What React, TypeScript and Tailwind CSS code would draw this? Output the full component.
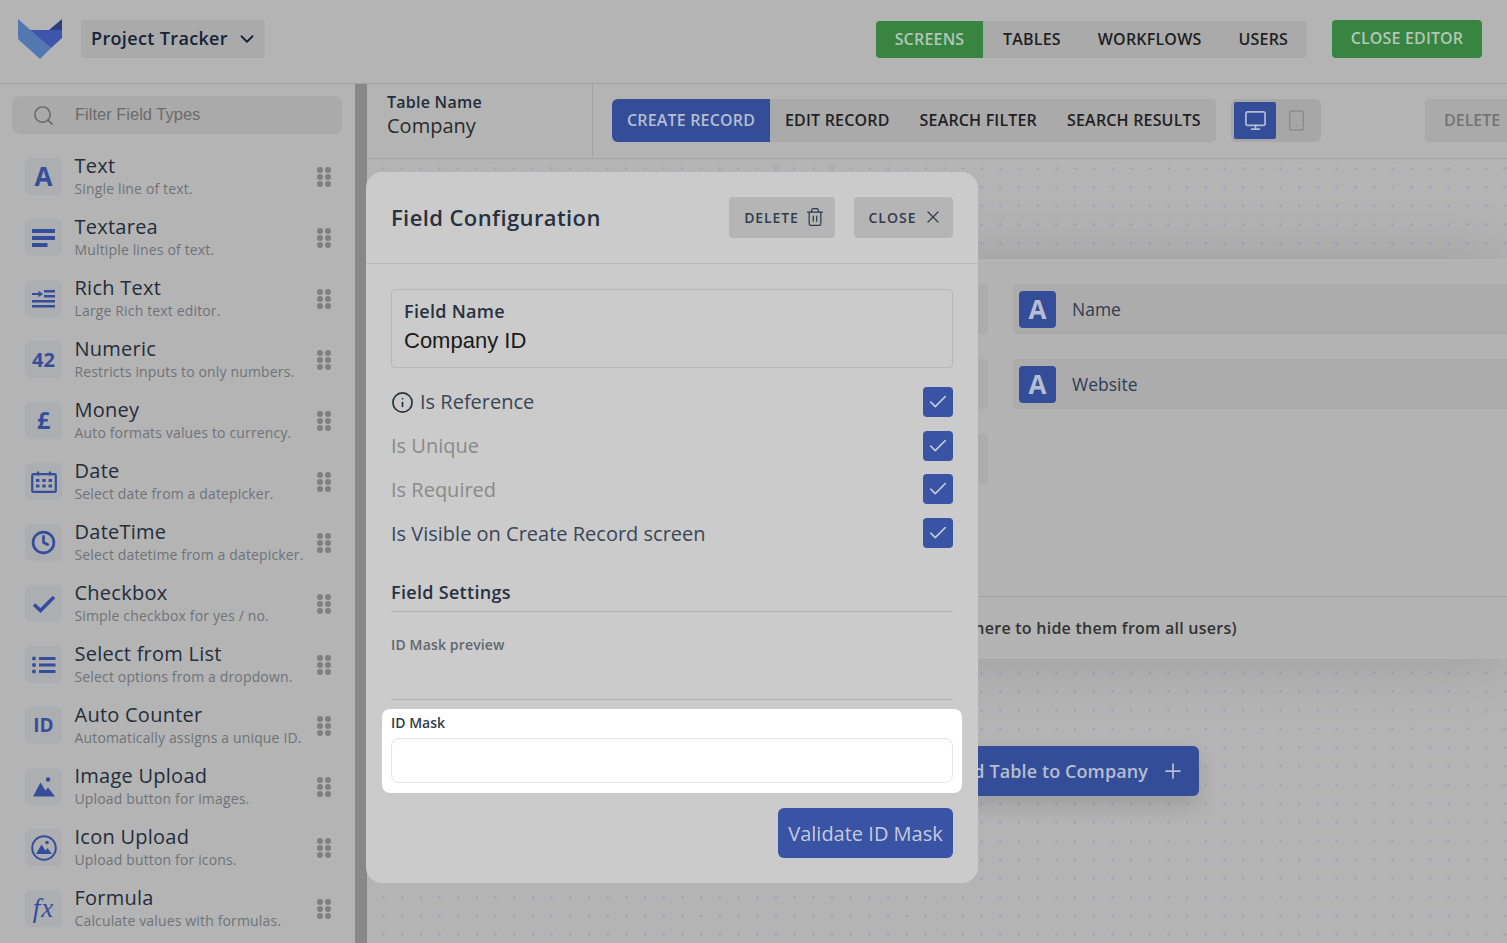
import React from "react";
import { ChevronDown, Search, Monitor, Smartphone, Trash2, X, Check, Info, Plus, Clock } from "lucide-react";

const blue = "#344e9b";

const Txt = ({ c }: { c: React.ReactNode }) => <>{c}</>;

const iconLines = (
  <svg width="24" height="20" viewBox="0 0 24 20" fill={blue}>
    <rect x="0" y="1" width="23" height="4" />
    <rect x="0" y="8" width="23" height="4" />
    <rect x="0" y="15" width="15.5" height="4" />
  </svg>
);
const iconRich = (
  <svg width="24" height="20" viewBox="0 0 24 20" fill={blue}>
    <rect x="12" y="1" width="11" height="2.5" />
    <rect x="12" y="6" width="11" height="2.5" />
    <path d="M0 4h6.5V1.8L11 5 6.5 8.2V6H0z" />
    <rect x="0" y="11" width="23" height="2.5" />
    <rect x="0" y="16" width="23" height="2.5" />
  </svg>
);
const iconCal = (
  <svg width="26" height="22" viewBox="0 0 26 22" fill="none">
    <rect x="1.2" y="3.2" width="23.6" height="17.6" rx="1.5" stroke={blue} strokeWidth="2.2" />
    <rect x="6" y="0.5" width="2.2" height="4" fill={blue} />
    <rect x="17.8" y="0.5" width="2.2" height="4" fill={blue} />
    <g fill={blue}>
      <rect x="5" y="8" width="3.4" height="3" /><rect x="11.3" y="8" width="3.4" height="3" /><rect x="17.6" y="8" width="3.4" height="3" />
      <rect x="5" y="13.5" width="3.4" height="3" /><rect x="11.3" y="13.5" width="3.4" height="3" /><rect x="17.6" y="13.5" width="3.4" height="3" />
    </g>
  </svg>
);
const iconCheck = (
  <svg width="24" height="18" viewBox="0 0 24 18" fill="none">
    <path d="M2 9.5 L8.5 15.5 L22 2" stroke={blue} strokeWidth="3.6" />
  </svg>
);
const iconList = (
  <svg width="24" height="18" viewBox="0 0 24 18" fill={blue}>
    <circle cx="2" cy="2.5" r="2" /><circle cx="2" cy="9" r="2" /><circle cx="2" cy="15.5" r="2" />
    <rect x="7" y="1" width="16.5" height="3" /><rect x="7" y="7.5" width="16.5" height="3" /><rect x="7" y="14" width="16.5" height="3" />
  </svg>
);
const iconImage = (
  <svg width="22" height="20" viewBox="0 0 22 20" fill={blue}>
    <circle cx="15" cy="2.5" r="2.2" />
    <path d="M0 19.5 L7.5 5.5 L12.5 13.5 L15 10.5 L22 19.5z" />
  </svg>
);
const iconImageRound = (
  <svg width="26" height="26" viewBox="0 0 26 26" fill="none">
    <circle cx="13" cy="13" r="11.8" stroke={blue} strokeWidth="2" />
    <circle cx="16" cy="7.5" r="1.8" fill={blue} />
    <path d="M5 19 L10.5 9.5 L14.5 15.5 L16.5 13 L21 19z" fill={blue} />
  </svg>
);

const fields: { t: string; d: string; i: React.ReactNode }[] = [
  { t: "Text", d: "Single line of text.", i: <span className="text-[26px] font-bold text-[#344e9b]">A</span> },
  { t: "Textarea", d: "Multiple lines of text.", i: iconLines },
  { t: "Rich Text", d: "Large Rich text editor.", i: iconRich },
  { t: "Numeric", d: "Restricts inputs to only numbers.", i: <span className="text-[20px] font-bold text-[#344e9b]">42</span> },
  { t: "Money", d: "Auto formats values to currency.", i: <span className="text-[23px] font-bold text-[#344e9b]">£</span> },
  { t: "Date", d: "Select date from a datepicker.", i: iconCal },
  { t: "DateTime", d: "Select datetime from a datepicker.", i: <Clock size={25} color={blue} strokeWidth={2.6} /> },
  { t: "Checkbox", d: "Simple checkbox for yes / no.", i: iconCheck },
  { t: "Select from List", d: "Select options from a dropdown.", i: iconList },
  { t: "Auto Counter", d: "Automatically assigns a unique ID.", i: <span className="text-[19px] font-bold text-[#344e9b]">ID</span> },
  { t: "Image Upload", d: "Upload button for images.", i: iconImage },
  { t: "Icon Upload", d: "Upload button for icons.", i: iconImageRound },
  { t: "Formula", d: "Calculate values with formulas.", i: <span className="font-['Liberation_Serif',serif] italic text-[27px] tracking-[1px] text-[#344e9b]">fx</span> },
];

const Grip = () => (
  <div className="grid grid-cols-2 gap-x-[1.5px] gap-y-[1px] w-[13.5px]">
    {[0, 1, 2, 3, 4, 5].map((k) => (
      <span key={k} className="w-[6px] h-[6px] rounded-full bg-[#7f7f7f]" />
    ))}
  </div>
);

const Tick = () => (
  <span className="w-[30px] h-[30px] rounded-[4px] bg-[#3953a5] flex items-center justify-center shrink-0">
    <Check size={22} color="#c9cedd" strokeWidth={1.75} />
  </span>
);

const FieldRow = ({ label }: { label: string }) => (
  <div className="h-[50px] bg-[#acacac] rounded-[4px] flex items-center pl-[6px]">
    <span className="w-[37px] h-[37px] rounded-[4px] bg-[#334d99] flex items-center justify-center text-[26px] font-bold text-[#b7bdd0]">A</span>
    <span className="ml-[16px] text-[17.5px] text-[#323c52]">{label}</span>
  </div>
);

export default function App() {
  return (
    <div className="w-full h-[943px] relative overflow-hidden flex flex-col bg-[#b4b4b4] font-['Open_Sans',sans-serif]">
      {/* Top bar */}
      <header className="h-[84px] shrink-0 border-b border-[#a4a4a4] flex items-center pl-[18px] pr-[25px]">
        <svg width="44" height="40" viewBox="0 0 44 40" className="shrink-0 -mt-[6px]">
          <path d="M0 0 L0 19 Q0 20 1 21 L21 39 Q22 40 23 39 L33 29 Z" fill="#5278b2" />
          <path d="M12 11 L44 11 L44 19 L33 29 Z" fill="#3f55ab" />
          <path d="M44 0 L44 11 L31 11 Z" fill="#2f3f80" />
        </svg>
        <div className="ml-[19px] w-[184px] h-[38px] -mt-[6px] rounded-[4px] bg-[#aaaaaa] flex items-center pl-[10px]">
          <span className="text-[18px] font-semibold tracking-[0.35px] text-[#15233b]">Project Tracker</span>
          <ChevronDown size={22} color="#15233b" strokeWidth={2} className="ml-[8px]" />
        </div>
        <nav className="ml-auto h-[37px] -mt-[5px] w-[431px] rounded-[4px] bg-[#aaaaaa] flex items-center text-[16px] font-semibold tracking-[0.2px] text-[#1f1f24]">
          <span className="w-[107px] h-full bg-[#378540] rounded-l-[4px] flex items-center justify-center text-[#b5c6b8]">SCREENS</span>
          <span className="ml-[20px]">TABLES</span>
          <span className="ml-[37px]">WORKFLOWS</span>
          <span className="ml-[37px]">USERS</span>
        </nav>
        <button className="ml-[25px] w-[150px] h-[38px] -mt-[6px] rounded-[4px] bg-[#378540] text-[16px] font-semibold tracking-[0.15px] text-[#b5c6b8] pb-[2px]">CLOSE EDITOR</button>
      </header>

      <div className="flex-1 flex min-h-0">
        {/* Sidebar */}
        <aside className="w-[368px] shrink-0 flex">
          <div className="w-[355px] shrink-0 pl-[12px] pt-[12px]">
            <div className="w-[330px] h-[38px] rounded-[8px] bg-[#aaaaaa] flex items-center pl-[20px]">
              <Search size={23} color="#666666" strokeWidth={1.5} />
              <span className="ml-[20px] -mt-[2px] text-[16.5px] font-['Liberation_Sans',sans-serif] text-[#6b6b6b]">Filter Field Types</span>
            </div>
            <ul className="mt-[24px] pl-[13px]">
              {fields.map((f) => (
                <li key={f.t} className="h-[61px] flex items-start relative">
                  <span className="w-[37px] h-[37px] rounded-[6px] bg-[#adaeb1] flex items-center justify-center shrink-0">
                    <Txt c={f.i} />
                  </span>
                  <div className="ml-[12.5px] -mt-[6px] flex flex-col">
                    <span className="text-[20px] leading-[27px] font-medium tracking-[0.25px] text-[#232d3b]">{f.t}</span>
                    <span className="text-[14px] leading-[19px] tracking-[0.15px] text-[#6f7378] whitespace-nowrap">{f.d}</span>
                  </div>
                  <span className="absolute left-[292px] top-[9px]">
                    <Grip />
                  </span>
                </li>
              ))}
            </ul>
          </div>
          <div className="w-[12px] bg-[#888888]" />
          <div className="w-[1px]" />
        </aside>

        {/* Main */}
        <main className="flex-1 min-w-0 flex flex-col overflow-hidden">
          <div className="h-[75px] shrink-0 border-b border-[#a4a4a4] flex items-start">
            <div className="w-[225px] h-[72px] border-r border-[#a4a4a4] pl-[19px] pt-[6px] shrink-0">
              <div className="text-[16px] leading-[24px] font-semibold tracking-[0.25px] text-[#232d3b]">Table Name</div>
              <div className="-mt-[1px] text-[20px] leading-[26px] text-[#2b2b2b]">Company</div>
            </div>
            <div className="ml-[19px] mt-[15px] w-[604px] h-[43px] rounded-[4px] bg-[#aaaaaa] flex items-center pb-[2px] text-[16px] font-semibold tracking-[0.18px] text-[#1f1f24] shrink-0">
              <span className="w-[158px] h-[43px] -mb-[2px] pb-[2px] rounded-l-[6px] bg-[#334d99] flex items-center justify-center text-[#b7bdd0]">CREATE RECORD</span>
              <span className="ml-[15px]">EDIT RECORD</span>
              <span className="ml-[30px]">SEARCH FILTER</span>
              <span className="ml-[30px]">SEARCH RESULTS</span>
            </div>
            <div className="ml-[15px] mt-[15px] w-[90px] h-[43px] rounded-[6px] bg-[#a7a7a7] flex items-center pl-[3px] shrink-0">
              <span className="w-[42px] h-[37px] rounded-[2px] bg-[#334d99] flex items-center justify-center">
                <Monitor size={23} color="#b7bdd0" strokeWidth={1.75} />
              </span>
              <span className="w-[40px] flex items-center justify-center">
                <Smartphone size={23} color="#8c8c8c" strokeWidth={1.5} />
              </span>
            </div>
            <div className="ml-[104px] mt-[15px] w-[120px] h-[43px] pb-[2px] rounded-l-[4px] bg-[#aaaaaa] flex items-center pl-[19px] text-[16px] font-semibold text-[#747474] shrink-0">DELETE</div>
          </div>

          <div className="flex-1 bg-[radial-gradient(circle,#9ba3bb_1px,transparent_1.4px)] bg-[length:18.7px_18.7px] bg-[position:6.2px_0px] pt-[100px] min-h-0">
            <section className="h-[400px] bg-[#b3b3b3] shadow-[0_0_60px_rgba(0,0,0,0.13)] flex flex-col">
              <div className="h-[338px] border-b border-[#a4a4a4] pt-[25px] pl-[370px] shrink-0">
                <div className="grid grid-cols-[250px_1fr] gap-x-[25px] gap-y-[25px] -mr-[60px]">
                  <div className="h-[50px] bg-[#acacac] rounded-[4px]" />
                  <FieldRow label="Name" />
                  <div className="h-[50px] bg-[#acacac] rounded-[4px]" />
                  <FieldRow label="Website" />
                  <div className="h-[50px] bg-[#acacac] rounded-[4px]" />
                </div>
              </div>
              <div className="flex-1 flex items-center text-[16px] font-semibold tracking-[0.25px] text-[#323232] pl-[401px] whitespace-nowrap">
                Hidden Fields (drag fields here to hide them from all users)
              </div>
            </section>
            <button className="mt-[87px] ml-[431px] w-[400px] h-[50px] rounded-[6px] bg-[#334d99] shadow-[0_10px_20px_rgba(0,0,0,0.12)] flex items-center justify-end pr-[14px] text-[18px] font-semibold tracking-[0.1px] text-[#b7bdd0]">
              Add Table to Company
              <Plus size={24} strokeWidth={1.75} className="ml-[13px]" />
            </button>
          </div>
        </main>
      </div>

      {/* Modal */}
      <div className="absolute left-[366px] top-[172px] w-[612px] h-[711px] rounded-[16px] bg-[#cbcbcb] flex flex-col">
        <div className="h-[92px] shrink-0 border-b border-[#bababa] flex items-center pl-[25px] pr-[25px]">
          <h2 className="text-[22px] font-semibold tracking-[0.4px] text-[#27313f] mr-auto -mt-[1px]">Field Configuration</h2>
          <button className="w-[106px] h-[41px] pl-[5px] rounded-[4px] bg-[#b5b5b5] flex items-center justify-center text-[14px] font-semibold tracking-[0.9px] text-[#323c4d] -mt-[1px]">
            DELETE
            <Trash2 size={20} strokeWidth={1.5} className="ml-[6px]" />
          </button>
          <button className="ml-[19px] w-[99px] h-[41px] pl-[4px] rounded-[4px] bg-[#b5b5b5] flex items-center justify-center text-[14px] font-semibold tracking-[1px] text-[#323c4d] -mt-[1px]">
            CLOSE
            <X size={20} strokeWidth={1.5} className="ml-[6px]" />
          </button>
        </div>
        <div className="px-[25px] pt-[25px] flex-1 flex flex-col">
          <div className="h-[79px] shrink-0 rounded-[4px] border border-[#b8b8b8] pl-[12px] pt-[8px]">
            <div className="text-[18px] leading-[26px] font-semibold tracking-[0.3px] text-[#27313f]">Field Name</div>
            <div className="mt-[2px] text-[22px] leading-[30px] font-['Liberation_Sans',sans-serif] text-[#1a1a1a]">Company ID</div>
          </div>
          <div className="mt-[19px] flex flex-col gap-[14px]">
            <div className="flex items-center justify-between h-[30px]">
              <span className="flex items-center text-[20px] text-[#3a4656]">
                <Info size={23} color="#27313f" strokeWidth={1.75} className="mr-[6px]" />
                Is Reference
              </span>
              <Tick />
            </div>
            <div className="flex items-center justify-between h-[30px]">
              <span className="text-[20px] text-[#8a8a8a]">Is Unique</span>
              <Tick />
            </div>
            <div className="flex items-center justify-between h-[30px] -mt-[1px]">
              <span className="text-[20px] text-[#8a8a8a] mt-[1px]">Is Required</span>
              <Tick />
            </div>
            <div className="flex items-center justify-between h-[30px]">
              <span className="text-[20px] text-[#3a4656] mt-[1px]">Is Visible on Create Record screen</span>
              <Tick />
            </div>
          </div>
          <div className="mt-[31px] h-[33px] shrink-0 border-b border-[#b4b4b4] text-[18px] leading-[26px] font-semibold tracking-[0.3px] text-[#27313f]">Field Settings</div>
          <div className="mt-[23px] h-[65px] shrink-0 border-b border-[#b4b4b4] text-[14px] leading-[20px] font-semibold tracking-[0.15px] text-[#5f6670]">ID Mask preview</div>
          <div className="mt-[9px] -mx-[9px] h-[84px] shrink-0 rounded-[8px] bg-white px-[9px] pt-[4px]">
            <div className="text-[14px] leading-[20px] font-semibold text-[#323c4d]">ID Mask</div>
            <div className="mt-[5px] h-[45px] rounded-[8px] border border-[#e5e5e5] bg-white" />
          </div>
          <div className="mt-[15px] flex justify-end">
            <button className="w-[175px] h-[50px] pt-[1px] rounded-[6px] bg-[#3953a5] text-[20px] text-[#c6cbdc]">Validate ID Mask</button>
          </div>
        </div>
      </div>
    </div>
  );
}
